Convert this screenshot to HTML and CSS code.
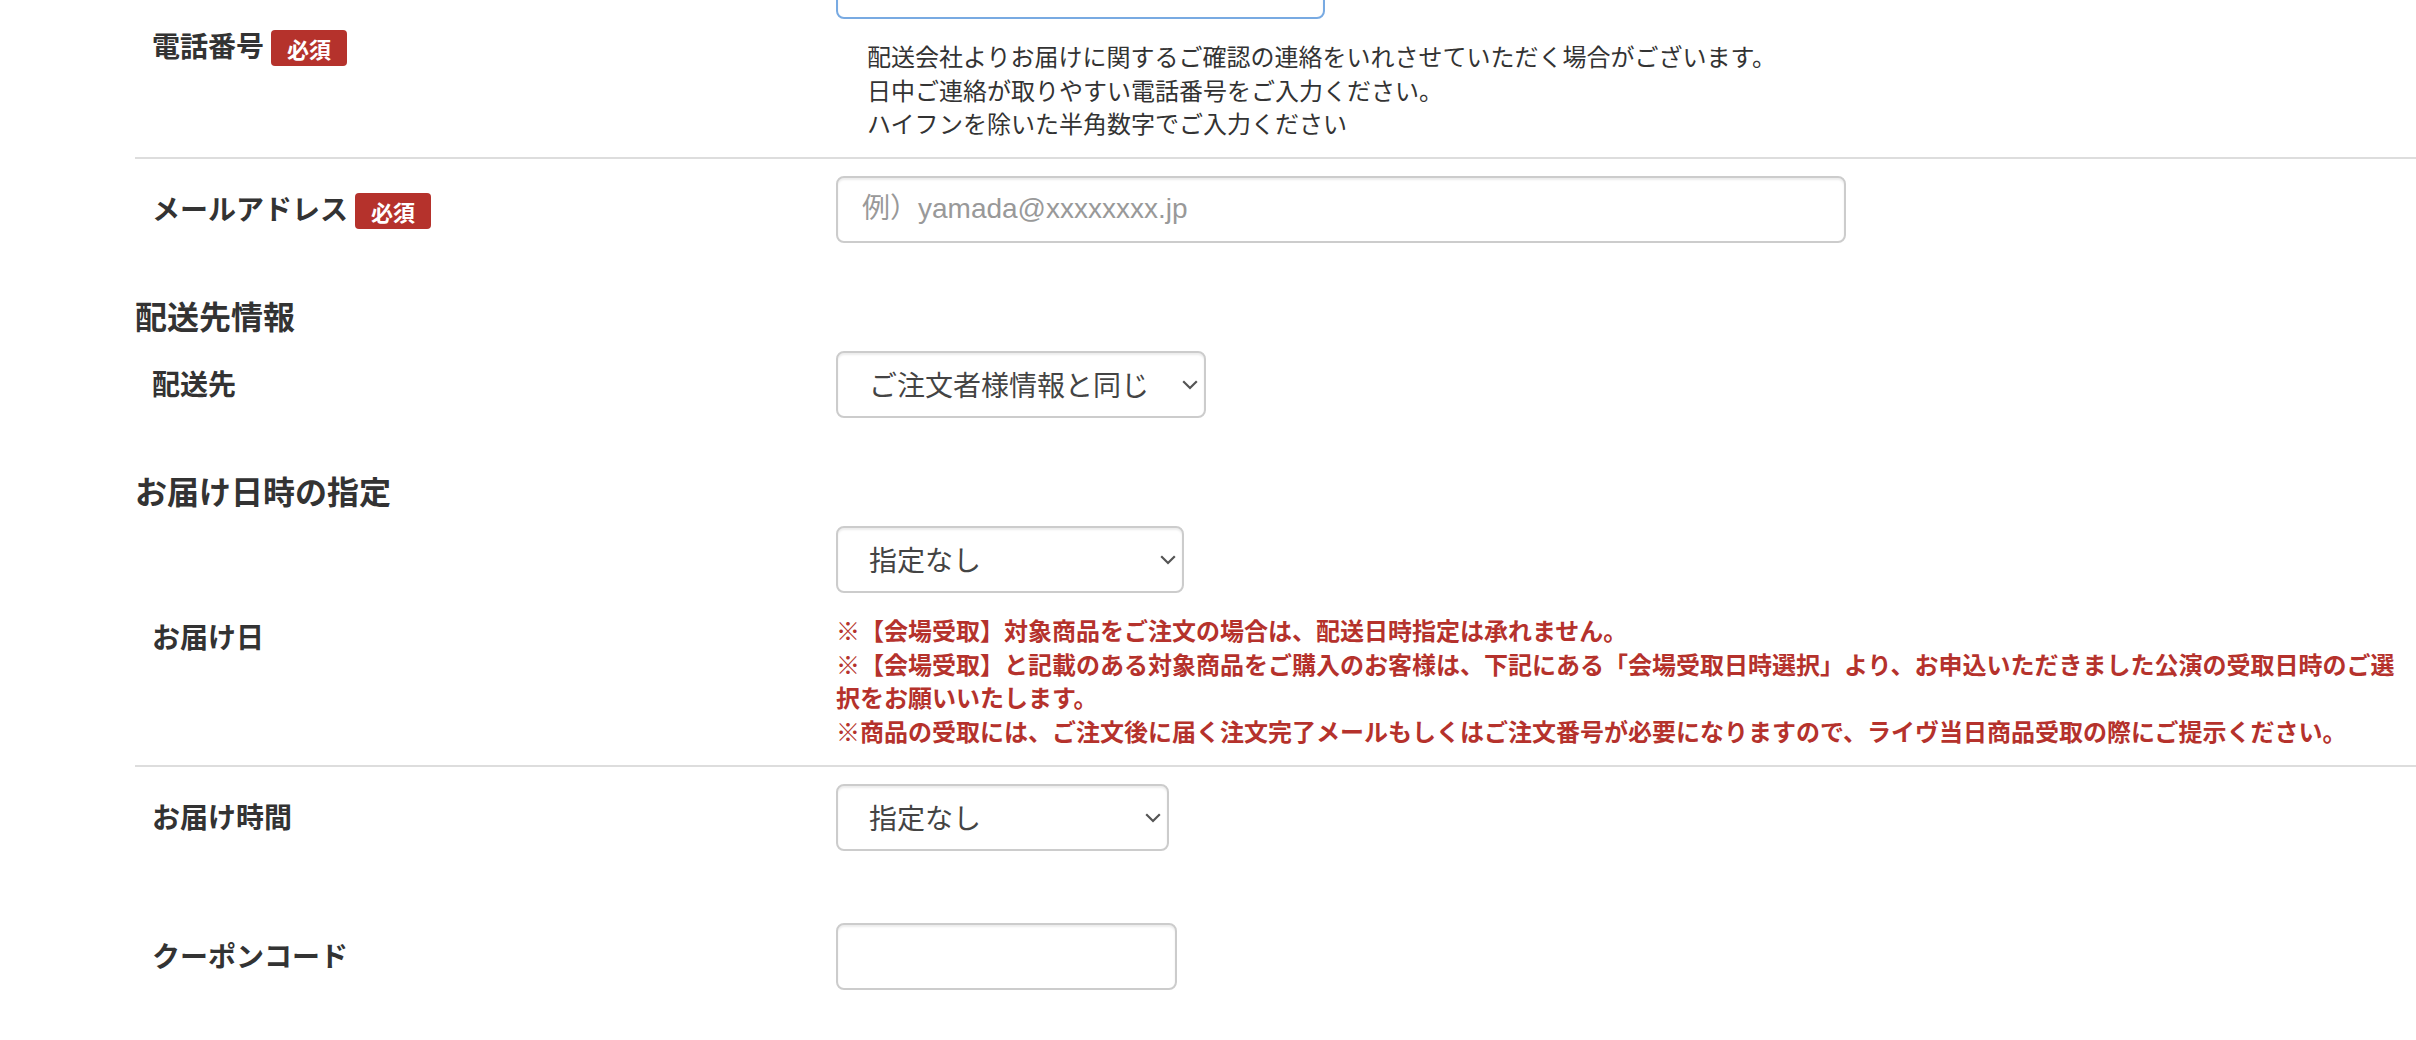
FILE: index.html
```html
<!DOCTYPE html>
<html lang="ja">
<head>
<meta charset="utf-8">
<title>ご注文手続き</title>
<link rel="stylesheet" href="styles.css">
</head>
<body>
<form class="order-form">
  <div class="row row-bordered">
    <div class="label">電話番号<span class="req">必須</span></div>
    <div class="value">
      <input class="field field-focus field-tel" type="text">
      <p class="help">配送会社よりお届けに関するご確認の連絡をいれさせていただく場合がございます。<br>日中ご連絡が取りやすい電話番号をご入力ください。<br>ハイフンを除いた半角数字でご入力ください</p>
    </div>
  </div>

  <div class="row">
    <div class="label">メールアドレス<span class="req">必須</span></div>
    <div class="value">
      <input class="field field-mail" type="text" placeholder="例）yamada@xxxxxxxx.jp">
    </div>
  </div>

  <h2 class="section-title">配送先情報</h2>
  <div class="row">
    <div class="label">配送先</div>
    <div class="value">
      <div class="select-wrap sel-dest">
        <select class="field select"><option>ご注文者様情報と同じ</option></select>
        <svg class="chev" width="16" height="10" viewBox="0 0 16 10"><path d="M1.2 1.2 L8 8 L14.8 1.2" fill="none" stroke="#555" stroke-width="2.2"/></svg>
      </div>
    </div>
  </div>

  <h2 class="section-title">お届け日時の指定</h2>
  <div class="row row-bordered">
    <div class="label">お届け日</div>
    <div class="value">
      <div class="select-wrap sel-date">
        <select class="field select"><option>指定なし</option></select>
        <svg class="chev" width="16" height="10" viewBox="0 0 16 10"><path d="M1.2 1.2 L8 8 L14.8 1.2" fill="none" stroke="#555" stroke-width="2.2"/></svg>
      </div>
      <p class="help help-alert">※【会場受取】対象商品をご注文の場合は、配送日時指定は承れません。<br>※【会場受取】と記載のある対象商品をご購入のお客様は、下記にある「会場受取日時選択」より、お申込いただきました公演の受取日時のご選択をお願いいたします。<br>※商品の受取には、ご注文後に届く注文完了メールもしくはご注文番号が必要になりますので、ライヴ当日商品受取の際にご提示ください。</p>
    </div>
  </div>

  <div class="row">
    <div class="label">お届け時間</div>
    <div class="value">
      <div class="select-wrap sel-time">
        <select class="field select"><option>指定なし</option></select>
        <svg class="chev" width="16" height="10" viewBox="0 0 16 10"><path d="M1.2 1.2 L8 8 L14.8 1.2" fill="none" stroke="#555" stroke-width="2.2"/></svg>
      </div>
    </div>
  </div>

  <div class="row row-coupon">
    <div class="label">クーポンコード</div>
    <div class="value">
      <input class="field field-coupon" type="text">
    </div>
  </div>
</form>
</body>
</html>
```

FILE: styles.css
```css
html, body {
  margin: 0;
  padding: 0;
  background: #fff;
}

body {
  font-family: "Liberation Sans", "Noto Sans CJK JP", sans-serif;
  color: #333;
  overflow: hidden;
}

.order-form {
  margin: -65px 0 0 135px;
}

.row {
  display: grid;
  grid-template-columns: 701px 1fr;
  align-items: center;
  padding: 17px 10px 17px 0;
}

.row-bordered {
  border-bottom: 2px solid #dddddd;
}

.row-coupon {
  margin-top: 38px;
}

.label {
  display: flex;
  align-items: center;
  padding-left: 17px;
  padding-bottom: 2px;
  font-family: "Noto Sans CJK JP", sans-serif;
  font-size: 28px;
  font-weight: 700;
  line-height: 1;
  color: #333;
}

.req {
  display: inline-block;
  margin-left: 7px;
  margin-top: 6px;
  height: 36px;
  padding: 0 16px;
  line-height: 36px;
  font-size: 22px;
  font-weight: 700;
  color: #fff;
  background: #b5322c;
  border-radius: 4px;
}

.value {
  min-width: 0;
}

.field {
  display: block;
  box-sizing: border-box;
  height: 67px;
  margin: 0;
  padding: 0 24px;
  font-family: "Liberation Sans", "Noto Sans CJK JP", sans-serif;
  font-size: 28px;
  color: #555;
  background: #fff;
  border: 2px solid #cccccc;
  border-radius: 8px;
  box-shadow: inset 0 2px 2px rgba(0, 0, 0, 0.075);
  outline: none;
}

.field::placeholder {
  color: #999;
}

.field-focus {
  border-color: #78aae2;
}

.field-tel {
  width: 489px;
}

.field-mail {
  width: 1010px;
}

.field-coupon {
  width: 341px;
}

.select-wrap {
  position: relative;
  display: inline-block;
  vertical-align: top;
}

.select {
  appearance: none;
  -webkit-appearance: none;
  width: 100%;
  padding-left: 31px;
  font-family: "Noto Sans CJK JP", sans-serif;
  color: #444;
}

.chev {
  position: absolute;
  right: 8px;
  top: 29px;
  pointer-events: none;
}

.sel-dest {
  width: 370px;
}

.sel-date {
  width: 348px;
}

.sel-time {
  width: 333px;
}

.help {
  margin: 20px 0 0;
  padding-left: 31px;
  font-family: "Noto Sans CJK JP", sans-serif;
  font-size: 24px;
  line-height: 33.6px;
  color: #333;
}

.help-alert {
  margin-top: 20.5px;
  padding-left: 0;
  font-weight: 700;
  color: #b5322c;
}

.section-title {
  margin: 38px 0 2px;
  font-family: "Noto Sans CJK JP", sans-serif;
  font-size: 32px;
  font-weight: 700;
  line-height: 34px;
  color: #333;
}
```
